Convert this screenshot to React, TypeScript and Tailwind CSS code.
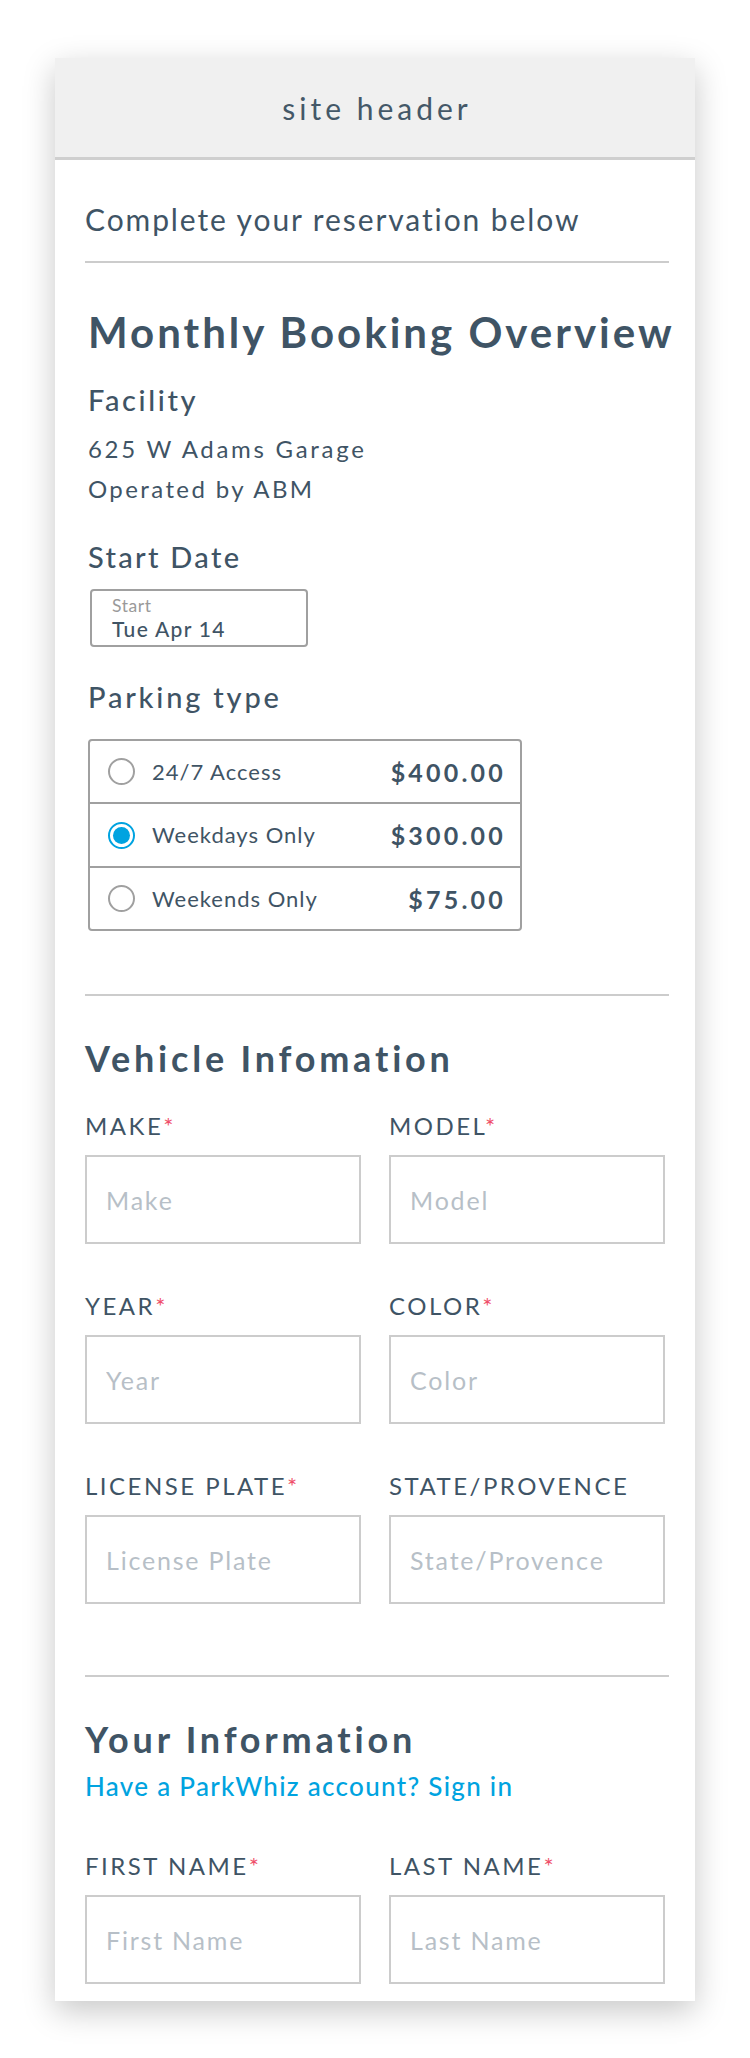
import { ReactNode } from 'react';

const options = [
  { label: '24/7 Access', price: '$400.00', selected: false, h: 'h-[61px]' },
  { label: 'Weekdays Only', price: '$300.00', selected: true, h: 'h-[64px] border-t-2 border-[#a0a0a0]' },
  { label: 'Weekends Only', price: '$75.00', selected: false, h: 'h-[63px] border-t-2 border-[#a0a0a0]' },
];

function Radio({ selected }: { selected: boolean }) {
  if (selected) {
    return (
      <span className="flex h-[27px] w-[27px] shrink-0 items-center justify-center rounded-full border-2 border-[#00a3e0] p-[3px]">
        <span className="block h-full w-full rounded-full bg-[#00a3e0]" />
      </span>
    );
  }
  return <span className="block h-[27px] w-[27px] shrink-0 rounded-full border-2 border-[#a0a0a0]" />;
}

function Field({ label, placeholder, required = true }: { label: string; placeholder: string; required?: boolean }) {
  return (
    <div>
      <div className="text-[24px] leading-[28px] tracking-[2.5px] uppercase">
        {label}
        {required && <span className="text-[#ef4f6a]">*</span>}
      </div>
      <input
        placeholder={placeholder}
        className="mt-[15px] block h-[89px] w-full border-2 border-[#cccccc] bg-white pl-[19px] text-[25px] tracking-[1.8px] outline-none placeholder:text-[#b7bfc7]"
      />
    </div>
  );
}

function Divider({ className = '' }: { className?: string }) {
  return <div className={`h-[2px] bg-[#cccccc] ${className}`} />;
}

function SectionTitle({ children, className = '' }: { children: ReactNode; className?: string }) {
  return <h2 className={`text-[36px] font-bold leading-[44px] tracking-[3.8px] ${className}`}>{children}</h2>;
}

export default function App() {
  return (
    <div className="min-h-[2058px] bg-white pt-[58px] font-[family-name:Lato,sans-serif] text-[#3f5465]">
      <div className="mx-auto w-[640px] bg-white pb-[17px] shadow-[0_10px_30px_rgba(0,0,0,0.22)]">
        <header className="flex h-[102px] items-center justify-center border-b-[3px] border-[#cfcfcf] bg-[#f0f0f0] pl-[4px] text-[30px] leading-[36px] tracking-[4px] text-[#445868]">
          site header
        </header>

        <div className="pl-[30px] pr-[26px]">
          <p className="mt-[41px] text-[30px] leading-[36px] tracking-[1.9px]">Complete your reservation below</p>
          <Divider className="mt-[24px]" />

          {/* booking overview */}
          <div className="pl-[3px]">
            <h1 className="mt-[44px] whitespace-nowrap text-[42px] font-bold leading-[50px] tracking-[3px]">
              Monthly Booking Overview
            </h1>

            <h3 className="mt-[26px] text-[29px] font-medium leading-[34px] tracking-[2.6px]">Facility</h3>
            <div className="mt-[12px] text-[24px] leading-[40px]">
              <p className="tracking-[2.7px]">625 W Adams Garage</p>
              <p className="tracking-[2.4px]">Operated by ABM</p>
            </div>

            <h3 className="mt-[31px] text-[29px] font-medium leading-[34px] tracking-[2.3px]">Start Date</h3>
            <div className="ml-[2px] mt-[15px] h-[58px] w-[218px] rounded-[4px] border-2 border-[#a0a0a0] pl-[20px] pt-[6px]">
              <div className="text-[17.5px] leading-[18px] tracking-[0.6px] text-[#9a9a9a]">Start</div>
              <div className="mt-[3px] text-[21px] font-medium leading-[22px] tracking-[1.3px]">Tue Apr 14</div>
            </div>

            <h3 className="mt-[33px] text-[29px] font-medium leading-[34px] tracking-[2.8px]">Parking type</h3>
            <div className="mt-[25px] w-[434px] overflow-hidden rounded-[4px] border-2 border-[#a0a0a0]">
              {options.map((o) => (
                <div key={o.label} className={`flex items-center pl-[18px] pr-[14px] ${o.h}`}>
                  <Radio selected={o.selected} />
                  <span className="ml-[17px] text-[22px] leading-[26px] tracking-[1px]">{o.label}</span>
                  <span className="ml-auto text-[25px] font-bold leading-[30px] tracking-[3.2px]">{o.price}</span>
                </div>
              ))}
            </div>
          </div>

          <Divider className="mt-[63px]" />

          {/* vehicle */}
          <SectionTitle className="mt-[40px]">Vehicle Infomation</SectionTitle>
          <div className="mt-[32px] grid grid-cols-[276px_276px] gap-x-[28px] gap-y-[48px]">
            <Field label="Make" placeholder="Make" />
            <Field label="Model" placeholder="Model" />
            <Field label="Year" placeholder="Year" />
            <Field label="Color" placeholder="Color" />
            <Field label="License Plate" placeholder="License Plate" />
            <Field label="State/Provence" placeholder="State/Provence" required={false} />
          </div>

          <Divider className="mt-[71px]" />

          {/* your info */}
          <SectionTitle className="mt-[40px]">Your Information</SectionTitle>
          <a href="#" className="mt-[10px] block text-[26px] font-medium leading-[30px] tracking-[1.3px] text-[#00a3e0]">
            Have a ParkWhiz account? Sign in
          </a>
          <div className="mt-[51px] grid grid-cols-[276px_276px] gap-x-[28px]">
            <Field label="First Name" placeholder="First Name" />
            <Field label="Last Name" placeholder="Last Name" />
          </div>
        </div>
      </div>
    </div>
  );
}
